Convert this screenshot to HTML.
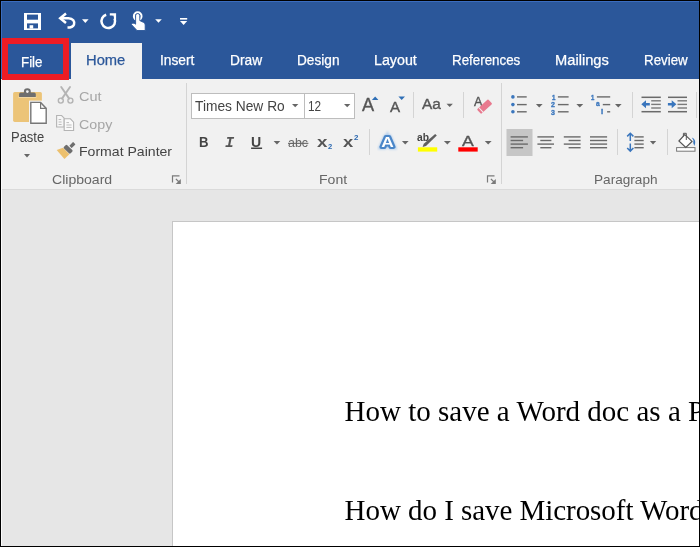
<!DOCTYPE html>
<html lang="en"><head><meta charset="utf-8"><title>Word - File tab</title>
<style>
html,body{margin:0;padding:0;background:#000;}
body{width:700px;height:547px;overflow:hidden;position:relative;font-family:"Liberation Sans",sans-serif;}
#win{position:absolute;left:1px;top:1px;width:698px;height:545px;overflow:hidden;background:#e6e6e6;}
#app{position:absolute;left:-1px;top:-1px;width:700px;height:547px;will-change:transform;}
.abs,.t,.a{position:absolute;}
.t{white-space:nowrap;transform-origin:0 0;display:block;}
.a{display:block;overflow:visible;}
#title{left:0;top:0;width:700px;height:79px;background:#2b579a;}
#ribbon{left:0;top:79px;width:700px;height:110px;background:#f1f1f1;border-bottom:1px solid #dadada;}
#hometab{left:71px;top:43px;width:71px;height:36px;background:#f1f1f1;}
#filebox{left:2px;top:38px;width:55px;height:30px;border:6px solid #ed1c24;}
#doc{left:0;top:190px;width:700px;height:357px;background:#e6e6e6;}
#page{left:172px;top:221px;width:540px;height:340px;background:#fff;border:1px solid #c6c6c6;}
.vs{position:absolute;width:1px;background:#d4d4d4;}
.box{position:absolute;background:#fff;border:1px solid #bdbdbd;box-sizing:border-box;}
</style></head><body><div id="win"><div id="app">

<div class="abs" id="title"></div><div class="abs" id="hilite" style="left:1px;top:1px;width:698px;height:1px;background:#3a6cbf"></div><div class="abs" style="left:1px;top:1px;width:1px;height:77px;background:#3a6cbf"></div>
<div class="abs" id="ribbon"></div><div class="abs" id="hometab"></div>
<div class="abs" id="doc"></div><div class="abs" id="page"></div>
<div class="abs" style="left:1px;top:80px;width:1px;height:466px;background:#fbfbfb"></div>
<span class="t" style="left:21.20px;top:55.00px;font-size:14.5px;line-height:14.5px;color:#fff;font-family:'Liberation Sans',sans-serif;transform:scaleX(0.9208);-webkit-text-stroke:0.25px #fff;">File</span>
<span class="t" style="left:86.40px;top:53.25px;font-size:14px;line-height:14px;color:#2b579a;font-family:'Liberation Sans',sans-serif;transform:scaleX(1.0522);-webkit-text-stroke:0.25px #2b579a;">Home</span>
<span class="t" style="left:159.90px;top:53.25px;font-size:14px;line-height:14px;color:#fff;font-family:'Liberation Sans',sans-serif;transform:scaleX(0.9829);-webkit-text-stroke:0.25px #fff;">Insert</span>
<span class="t" style="left:229.70px;top:53.25px;font-size:14px;line-height:14px;color:#fff;font-family:'Liberation Sans',sans-serif;transform:scaleX(0.9817);-webkit-text-stroke:0.25px #fff;">Draw</span>
<span class="t" style="left:296.80px;top:53.25px;font-size:14px;line-height:14px;color:#fff;font-family:'Liberation Sans',sans-serif;transform:scaleX(0.9748);-webkit-text-stroke:0.25px #fff;">Design</span>
<span class="t" style="left:374.30px;top:53.25px;font-size:14px;line-height:14px;color:#fff;font-family:'Liberation Sans',sans-serif;transform:scaleX(1.0178);-webkit-text-stroke:0.25px #fff;">Layout</span>
<span class="t" style="left:452.30px;top:53.25px;font-size:14px;line-height:14px;color:#fff;font-family:'Liberation Sans',sans-serif;transform:scaleX(0.9539);-webkit-text-stroke:0.25px #fff;">References</span>
<span class="t" style="left:555.20px;top:53.25px;font-size:14px;line-height:14px;color:#fff;font-family:'Liberation Sans',sans-serif;transform:scaleX(1.0477);-webkit-text-stroke:0.25px #fff;">Mailings</span>
<span class="t" style="left:644.00px;top:53.25px;font-size:14px;line-height:14px;color:#fff;font-family:'Liberation Sans',sans-serif;transform:scaleX(0.9532);-webkit-text-stroke:0.25px #fff;">Review</span>
<div class="abs" id="filebox"></div>
<span class="t" style="left:79.00px;top:89.95px;font-size:13.6px;line-height:13.6px;color:#a6a6a6;font-family:'Liberation Sans',sans-serif;transform:scaleX(1.0686);">Cut</span>
<span class="t" style="left:79.00px;top:117.95px;font-size:13.6px;line-height:13.6px;color:#a6a6a6;font-family:'Liberation Sans',sans-serif;transform:scaleX(1.0488);">Copy</span>
<span class="t" style="left:11.00px;top:130.85px;font-size:13.8px;line-height:13.8px;color:#444;font-family:'Liberation Sans',sans-serif;transform:scaleX(0.9405);">Paste</span>
<span class="t" style="left:79.00px;top:144.95px;font-size:13.6px;line-height:13.6px;color:#444;font-family:'Liberation Sans',sans-serif;transform:scaleX(1.0350);">Format Painter</span>
<span class="t" style="left:51.60px;top:173.25px;font-size:13px;line-height:13px;color:#666;font-family:'Liberation Sans',sans-serif;transform:scaleX(1.0818);">Clipboard</span>
<span class="t" style="left:319.30px;top:173.25px;font-size:13px;line-height:13px;color:#666;font-family:'Liberation Sans',sans-serif;transform:scaleX(1.0808);">Font</span>
<span class="t" style="left:593.60px;top:173.25px;font-size:13px;line-height:13px;color:#666;font-family:'Liberation Sans',sans-serif;transform:scaleX(1.0461);">Paragraph</span>
<svg class="a" style="left:24px;top:154px" width="6" height="3.5" viewBox="0 0 6 3.5"><path d="M0 0H6L3.0 3.5Z" fill="#666"/></svg>
<div class="vs" style="left:186px;top:83px;height:101px"></div>
<div class="vs" style="left:501px;top:83px;height:101px"></div>
<div class="vs" style="left:413px;top:92px;height:26px"></div>
<div class="vs" style="left:463px;top:92px;height:26px"></div>
<div class="vs" style="left:369px;top:129px;height:26px"></div>
<div class="vs" style="left:632px;top:92px;height:26px"></div>
<div class="vs" style="left:617px;top:129px;height:26px"></div>
<div class="vs" style="left:667px;top:129px;height:26px"></div>
<div class="vs" style="left:695.5px;top:92px;height:26px"></div>
<div class="box" style="left:191px;top:92.5px;width:113.5px;height:26.5px"></div>
<div class="box" style="left:303.5px;top:92.5px;width:51.5px;height:26.5px"></div>
<span class="t" style="left:195.10px;top:99.25px;font-size:14px;line-height:14px;color:#444;font-family:'Liberation Sans',sans-serif;transform:scaleX(0.9830);">Times New Ro</span>
<span class="t" style="left:307.70px;top:99.25px;font-size:14px;line-height:14px;color:#444;font-family:'Liberation Sans',sans-serif;transform:scaleX(0.8424);">12</span>
<svg class="a" style="left:291.7px;top:104.3px" width="6.400000000000034" height="3.299999999999997" viewBox="0 0 6.400000000000034 3.299999999999997"><path d="M0 0H6.400000000000034L3.200000000000017 3.299999999999997Z" fill="#666"/></svg>
<svg class="a" style="left:343.5px;top:104.3px" width="6.399999999999977" height="3.299999999999997" viewBox="0 0 6.399999999999977 3.299999999999997"><path d="M0 0H6.399999999999977L3.1999999999999886 3.299999999999997Z" fill="#666"/></svg>
<span class="t" style="left:362.10px;top:97.35px;font-size:17.8px;line-height:17.8px;color:#555;font-family:'Liberation Sans',sans-serif;transform:scaleX(1.0211);-webkit-text-stroke:0.35px #555;">A</span>
<span class="t" style="left:389.50px;top:100.85px;font-size:13.8px;line-height:13.8px;color:#555;font-family:'Liberation Sans',sans-serif;transform:scaleX(1.0978);-webkit-text-stroke:0.35px #555;">A</span>
<span class="t" style="left:421.80px;top:97.25px;font-size:14px;line-height:14px;color:#555;font-family:'Liberation Sans',sans-serif;transform:scaleX(1.1020);-webkit-text-stroke:0.35px #555;">Aa</span>
<span class="t" style="left:474.10px;top:95.25px;font-size:13px;line-height:13px;color:#555;font-family:'Liberation Sans',sans-serif;transform:scaleX(0.9711);-webkit-text-stroke:0.35px #555;">A</span>
<span class="t" style="left:198.70px;top:134.25px;font-size:15px;line-height:15px;color:#444;font-family:'Liberation Sans',sans-serif;font-weight:700;transform:scaleX(0.8756);">B</span>
<span class="t" style="left:225.20px;top:135.75px;font-size:15px;line-height:15px;color:#555;font-family:'Liberation Mono',monospace;font-weight:700;font-style:italic;transform:scaleX(1.0166);">I</span>
<span class="t" style="left:251.10px;top:134.25px;font-size:15px;line-height:15px;color:#444;font-family:'Liberation Sans',sans-serif;font-weight:700;transform:scaleX(0.9401);">U</span>
<span class="t" style="left:287.90px;top:136.25px;font-size:13px;line-height:13px;color:#666;font-family:'Liberation Sans',sans-serif;transform:scaleX(0.9547);">abc</span>
<span class="t" style="left:316.70px;top:134.00px;font-size:15.5px;line-height:15.5px;color:#555;font-family:'Liberation Sans',sans-serif;font-weight:700;transform:scaleX(1.2093);">x</span>
<span class="t" style="left:327.50px;top:143.60px;font-size:6.3px;line-height:6.3px;color:#2b68b0;font-family:'Liberation Sans',sans-serif;font-weight:700;transform:scaleX(1.2000);">2</span>
<span class="t" style="left:342.90px;top:134.00px;font-size:15.5px;line-height:15.5px;color:#555;font-family:'Liberation Sans',sans-serif;font-weight:700;transform:scaleX(1.1860);">x</span>
<span class="t" style="left:353.70px;top:134.60px;font-size:6.3px;line-height:6.3px;color:#2b68b0;font-family:'Liberation Sans',sans-serif;font-weight:700;transform:scaleX(1.2571);">2</span>
<span class="t" style="left:417.20px;top:132.75px;font-size:10px;line-height:10px;color:#444;font-family:'Liberation Sans',sans-serif;font-weight:700;transform:scaleX(1.0300);">ab</span>
<span class="t" style="left:462.20px;top:133.25px;font-size:15px;line-height:15px;color:#555;font-family:'Liberation Sans',sans-serif;transform:scaleX(1.1800);-webkit-text-stroke:0.35px #555;">A</span>
<span class="t" style="left:551.50px;top:94.55px;font-size:6.4px;line-height:6.4px;color:#3a76bd;font-family:'Liberation Sans',sans-serif;font-weight:700;transform:scaleX(0.9577);-webkit-text-stroke:0.3px #3a76bd;">1</span>
<span class="t" style="left:551.20px;top:101.55px;font-size:6.4px;line-height:6.4px;color:#3a76bd;font-family:'Liberation Sans',sans-serif;font-weight:700;transform:scaleX(1.0986);-webkit-text-stroke:0.3px #3a76bd;">2</span>
<span class="t" style="left:551.20px;top:109.55px;font-size:6.4px;line-height:6.4px;color:#3a76bd;font-family:'Liberation Sans',sans-serif;font-weight:700;transform:scaleX(1.0986);-webkit-text-stroke:0.3px #3a76bd;">3</span>
<span class="t" style="left:590.90px;top:94.55px;font-size:6.4px;line-height:6.4px;color:#3a76bd;font-family:'Liberation Sans',sans-serif;font-weight:700;transform:scaleX(0.9296);-webkit-text-stroke:0.3px #3a76bd;">1</span>
<span class="t" style="left:595.80px;top:101.45px;font-size:6.6px;line-height:6.6px;color:#3a76bd;font-family:'Liberation Sans',sans-serif;font-weight:700;transform:scaleX(1.0133);-webkit-text-stroke:0.3px #3a76bd;">a</span>
<span class="t" style="left:601.00px;top:109.45px;font-size:6.6px;line-height:6.6px;color:#3a76bd;font-family:'Liberation Sans',sans-serif;font-weight:700;transform:scaleX(1.1892);-webkit-text-stroke:0.3px #3a76bd;">i</span>
<span class="t" style="left:344.60px;top:396.75px;font-size:29px;line-height:29px;color:#000;font-family:'Liberation Serif',serif;">How to save a Word doc as a P</span>
<span class="t" style="left:344.60px;top:495.75px;font-size:29px;line-height:29px;color:#000;font-family:'Liberation Serif',serif;letter-spacing:-0.05px;">How do I save Microsoft Word</span>
<svg class="a" id="qat" style="left:0;top:0" width="700" height="42" viewBox="0 0 700 42">
<g id="save"><rect x="24" y="13" width="17" height="17" fill="#fff"/><rect x="27" y="14.6" width="11" height="5.1" fill="#2b579a"/><rect x="27" y="23.4" width="11" height="5" fill="#2b579a"/><rect x="29.6" y="25.2" width="3.6" height="3.4" fill="#fff"/></g>
<g id="undo" fill="none" stroke="#fff" stroke-width="2.5"><path d="M66 13.6L60.2 18.2L66 23"/><path d="M60.5 18.2H68.5C73 18.2 75 21.5 74 24.5C73 27 70.5 27.6 67.5 27.6"/></g>
<path d="M82 19.2h6.6l-3.3 3.8z" fill="#fff"/>
<g id="repeat" fill="none" stroke="#fff" stroke-width="2.5"><path d="M106.2 14.7A6.8 6.8 0 1 0 114.6 18.6"/><path d="M109.8 14.4H115V19.8" stroke-width="2.2"/><path d="M111.6 14.4H115V18Z" fill="#fff" fill-opacity=".55" stroke="none"/></g>
<g id="touch" fill="#fff"><circle cx="137.7" cy="16.2" r="3.8" fill="none" stroke="#fff" stroke-width="2.1"/><path d="M135.6 15.6a2.1 2.1 0 0 1 4.2 0V20.6L143.6 22.4Q145.3 23.2 145.2 25V30.5H137L131.3 24.4Q132.8 22.4 134.4 23.4L135.6 24.2Z" stroke="#2b579a" stroke-width="0.9"/></g>
<path d="M155.2 19.2h6.6l-3.3 3.6z" fill="#fff"/>
<rect x="180" y="18" width="7.2" height="1.6" fill="#fff"/><path d="M180 21h7.2l-3.6 4z" fill="#fff"/>
</svg>

<svg class="a" id="ribicons" style="left:0;top:78px" width="700" height="111" viewBox="0 78 700 111">
<rect x="506.5" y="129" width="26" height="27" fill="#c6c6c6"/>
<g id="ic-paste"><rect x="13.1" y="92" width="28.8" height="29.9" rx="1.6" fill="#ecc478"/><rect x="18.4" y="96.6" width="18" height="1" fill="#f6e3bd"/><path d="M19.1 96.9V94.2Q19.1 92.6 20.7 92.6H23.9V91.4A3.4 3.2 0 0 1 30.8 91.4V92.6H34.2Q35.8 92.6 35.8 94.2V96.9Z" fill="#6e6e6e"/><circle cx="27.35" cy="91.6" r="1.35" fill="#f3f3f3"/><rect x="29" y="100.6" width="19" height="24.4" fill="#f3f3f3"/><path d="M30.8 102.4H40.6L46.2 108.4V123.3H30.8Z" fill="#fff" stroke="#777" stroke-width="1.4"/><path d="M40.6 102.4V108.4H46.2" fill="none" stroke="#777" stroke-width="1.2"/></g>
<g id="ic-cut" fill="none" stroke="#b4b4b4"><circle cx="60.8" cy="100.6" r="2.5" stroke-width="1.4"/><circle cx="70.4" cy="100.6" r="2.5" stroke-width="1.4"/><path d="M61.2 87L69.2 98.6M70 87L62 98.6" stroke-width="1.9" stroke-linecap="round"/></g>
<g id="ic-copy" fill="#f6f6f6" stroke="#b4b4b4" stroke-width="1.1"><path d="M56.6 115.5H61.6L64.2 118.2V127H56.6Z"/><path d="M64.2 118.8H70.4L73.6 122.2V130.5H64.2Z" fill="#fafafa"/><path d="M58.6 119.5H61.2M58.6 122H61.6M58.6 124.5H61.6M66.4 122.6H69M66.4 125H71.6M66.4 127.4H71.6" stroke="#bdbdbd" stroke-width="1"/></g>
<g id="ic-fp" transform="translate(68.2 149.2) rotate(-45)"><path d="M-2.7 -4.6L-2.7 4.4L-9.5 4.2L-8.7 -7.6Z" fill="#ecc06e"/><rect x="-2.4" y="-4.7" width="4.6" height="9.4" rx="1.2" fill="#6e6e6e"/><rect x="3.2" y="-1.7" width="5.4" height="3.4" rx=".5" fill="#6e6e6e"/></g>
<g transform="translate(171.9 175.3)" fill="none" stroke="#7a7a7a" stroke-width="1.2"><path d="M0.6 7.2V0.6H7.6"/><path d="M4 3.6L7.6 7.2" stroke-width="1.3"/><path d="M8.9 3.6V8.7H3.8Z" fill="#7a7a7a" stroke="none"/></g>
<g transform="translate(486.9 175.3)" fill="none" stroke="#7a7a7a" stroke-width="1.2"><path d="M0.6 7.2V0.6H7.6"/><path d="M4 3.6L7.6 7.2" stroke-width="1.3"/><path d="M8.9 3.6V8.7H3.8Z" fill="#7a7a7a" stroke="none"/></g>
<path d="M371.9 100H378.4L375.15 96.6Z" fill="#2f6fb6"/>
<path d="M398.4 96.6H405L401.7 100Z" fill="#2f6fb6"/>
<path d="M446.5 103.8H452.9L449.7 107.1Z" fill="#666"/>
<g id="ic-erase" transform="translate(484.6 106.6) rotate(-42.5)"><rect x="-7.6" y="-3.1" width="15.2" height="6.2" rx="1" fill="#e8798e"/><rect x="-5.4" y="-3.3" width="1" height="6.6" fill="#f3f3f3"/></g>
<path d="M273.6 141H280.3L276.95000000000005 144.5Z" fill="#666"/>
<path d="M401.9 141H408.6L405.25 144.5Z" fill="#666"/>
<path d="M443.9 141H450.8L447.35 144.5Z" fill="#666"/>
<path d="M484.8 141H491.6L488.20000000000005 144.5Z" fill="#666"/>
<rect x="251.1" y="147.5" width="11" height="1.5" fill="#444"/>
<rect x="288" y="142.8" width="20.4" height="1.1" fill="#666"/>
<defs><filter id="glow" x="-30%" y="-30%" width="160%" height="160%"><feGaussianBlur stdDeviation="1"/></filter></defs>
<text x="0" y="147.3" transform="translate(387.4 0) scale(1.14 1)" text-anchor="middle" font-family="'Liberation Sans',sans-serif" font-weight="700" font-size="15.2" fill="#a9c9ec" stroke="#a9c9ec" stroke-width="4.6" filter="url(#glow)">A</text>
<text x="0" y="147.3" transform="translate(387.4 0) scale(1.14 1)" text-anchor="middle" font-family="'Liberation Sans',sans-serif" font-weight="700" font-size="15.2" fill="#fff" stroke="#4a86c8" stroke-width="4" stroke-linejoin="round" paint-order="stroke">A</text>
<path d="M435.2 134L436.8 135.4L426 146L422.6 146.9L423.8 143.8Z" fill="#5f5f5f"/>
<rect x="417.9" y="147.3" width="19.3" height="4.3" fill="#ffff00"/>
<rect x="458.3" y="147.3" width="19.4" height="4.3" fill="#ff0000"/>
<circle cx="512.9" cy="96.9" r="1.8" fill="#3a76bd"/><rect x="517" y="96.2" width="9.7" height="1.4" fill="#6a6a6a"/>
<circle cx="512.9" cy="104.6" r="1.8" fill="#3a76bd"/><rect x="517" y="103.89999999999999" width="9.7" height="1.4" fill="#6a6a6a"/>
<circle cx="512.9" cy="111.8" r="1.8" fill="#3a76bd"/><rect x="517" y="111.1" width="9.7" height="1.4" fill="#6a6a6a"/>
<path d="M535.9 103.9H542.6L539.25 107.4Z" fill="#666"/>
<rect x="557.9" y="96.2" width="10.7" height="1.4" fill="#6a6a6a"/>
<rect x="557.9" y="103.89999999999999" width="10.7" height="1.4" fill="#6a6a6a"/>
<rect x="557.9" y="111.1" width="10.7" height="1.4" fill="#6a6a6a"/>
<path d="M576.4 103.9H583.2L579.8 107.4Z" fill="#666"/>
<rect x="596.9" y="96.2" width="13.3" height="1.4" fill="#6a6a6a"/><rect x="602.8" y="103.9" width="7.4" height="1.4" fill="#6a6a6a"/><rect x="607.1" y="111.1" width="3.1" height="1.4" fill="#6a6a6a"/>
<path d="M615 103.9H621.6L618.3 107.4Z" fill="#666"/>
<rect x="641.5" y="96.55" width="19.299999999999955" height="1.5" fill="#6a6a6a"/>
<rect x="641.5" y="110.95" width="19.299999999999955" height="1.5" fill="#6a6a6a"/>
<rect x="651.2" y="100.1" width="9.599999999999909" height="1.4" fill="#7a7a7a"/>
<rect x="651.2" y="103.7" width="9.599999999999909" height="1.4" fill="#7a7a7a"/>
<rect x="651.2" y="107.3" width="9.599999999999909" height="1.4" fill="#7a7a7a"/>
<rect x="668" y="96.55" width="19" height="1.5" fill="#6a6a6a"/>
<rect x="668" y="110.95" width="19" height="1.5" fill="#6a6a6a"/>
<rect x="677.5" y="100.1" width="9.5" height="1.4" fill="#7a7a7a"/>
<rect x="677.5" y="103.7" width="9.5" height="1.4" fill="#7a7a7a"/>
<rect x="677.5" y="107.3" width="9.5" height="1.4" fill="#7a7a7a"/>
<path d="M641.3 104.2L646 100.2V102.9H649.8V105.5H646V108.2Z" fill="#3a76bd"/>
<path d="M676.4 104.2L671.7 100.2V102.9H667.9V105.5H671.7V108.2Z" fill="#3a76bd"/>
<rect x="510.6" y="136.20000000000002" width="17.3" height="1.4" fill="#6a6a6a"/>
<rect x="510.6" y="139.8" width="12.5" height="1.4" fill="#6a6a6a"/>
<rect x="510.6" y="143.4" width="17.3" height="1.4" fill="#6a6a6a"/>
<rect x="510.6" y="147.0" width="12.5" height="1.4" fill="#6a6a6a"/>
<rect x="537.4" y="136.20000000000002" width="16.6" height="1.4" fill="#6a6a6a"/>
<rect x="540.3" y="139.8" width="11.1" height="1.4" fill="#6a6a6a"/>
<rect x="537.4" y="143.4" width="16.6" height="1.4" fill="#6a6a6a"/>
<rect x="540.3" y="147.0" width="11.1" height="1.4" fill="#6a6a6a"/>
<rect x="563.8" y="136.20000000000002" width="16.8" height="1.4" fill="#6a6a6a"/>
<rect x="568.6" y="139.8" width="12.0" height="1.4" fill="#6a6a6a"/>
<rect x="563.8" y="143.4" width="16.8" height="1.4" fill="#6a6a6a"/>
<rect x="568.6" y="147.0" width="12.0" height="1.4" fill="#6a6a6a"/>
<rect x="590" y="136.20000000000002" width="17.1" height="1.4" fill="#6a6a6a"/>
<rect x="590" y="139.8" width="17.1" height="1.4" fill="#6a6a6a"/>
<rect x="590" y="143.4" width="17.1" height="1.4" fill="#6a6a6a"/>
<rect x="590" y="147.0" width="17.1" height="1.4" fill="#6a6a6a"/>
<rect x="634.4" y="136.20000000000002" width="9.3" height="1.4" fill="#6a6a6a"/>
<rect x="634.4" y="139.8" width="9.3" height="1.4" fill="#6a6a6a"/>
<rect x="634.4" y="143.4" width="9.3" height="1.4" fill="#6a6a6a"/>
<rect x="634.4" y="147.0" width="9.3" height="1.4" fill="#6a6a6a"/>
<path d="M627.2 136.4L630.3 133.3L633.4 136.4M630.3 133.6V141M627.2 148L630.3 151.1L633.4 148M630.3 150.8V143.4" fill="none" stroke="#3a76bd" stroke-width="1.5"/>
<path d="M649.9 141H656.2L653.05 144.5Z" fill="#666"/>
<g id="ic-shade"><rect x="676.6" y="147.6" width="18.4" height="3.6" fill="#fff" stroke="#777" stroke-width="1"/><path d="M684.8 134.6L692 141.4L685.8 147.4L678.9 141Z" fill="#fff" stroke="#555" stroke-width="1.2"/><path d="M683.4 136.4V133.3H686.3V140" fill="none" stroke="#555" stroke-width="1"/><path d="M691.8 137.4Q697 139.6 694.4 146Q692.6 142.6 693.4 140.2Z" fill="#3a76bd"/></g>
</svg>
</div></div></body></html>
